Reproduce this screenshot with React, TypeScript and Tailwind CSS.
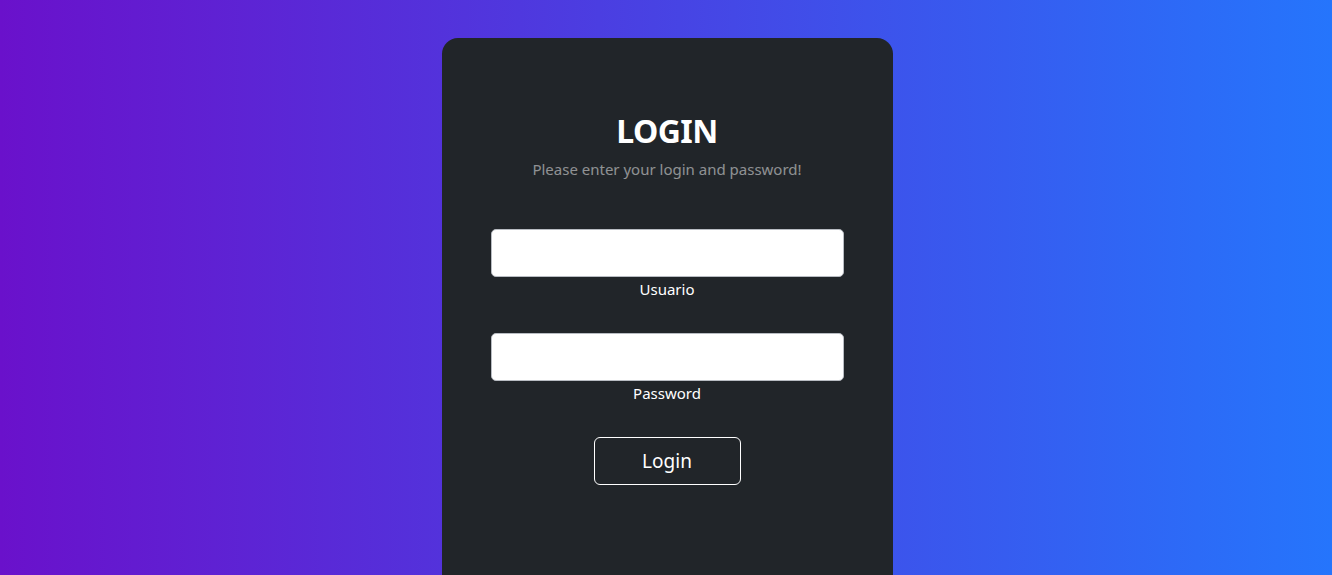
export default function App() {
  return (
    <div className="h-screen overflow-hidden bg-[linear-gradient(to_right,#6a11cb,#2575fc)] font-['Noto_Sans',sans-serif]">
      <div className="flex justify-center pl-[2px] pt-[38px]">
        <div className="w-[451px] rounded-2xl bg-[#212529] px-[49px] py-12 text-center text-white">
          <div className="mt-6 pb-12">
            {/* Header */}
            <h2 className="pt-[2px] text-[32px] font-bold uppercase leading-[38px] tracking-[-0.5px]">
              Login
            </h2>
            <p className="mt-[7px] text-[15px] leading-6 text-white/50">
              Please enter your login and password!
            </p>

            {/* Fields */}
            <div className="mt-12">
              <input
                type="text"
                className="block h-12 w-full rounded-[5px] border border-[#b8bcc2] bg-white px-4 text-lg text-black outline-none"
              />
              <label className="block text-[15px] leading-6">Usuario</label>
            </div>

            <div className="mt-8">
              <input
                type="password"
                className="block h-12 w-full rounded-[5px] border border-[#b8bcc2] bg-white px-4 text-lg text-black outline-none"
              />
              <label className="block text-[15px] leading-6">Password</label>
            </div>

            <button
              type="button"
              className="mt-8 h-12 w-[147px] rounded-md border border-white text-[19px] text-white"
            >
              Login
            </button>
          </div>
          <div className="h-24" />
        </div>
      </div>
    </div>
  );
}
